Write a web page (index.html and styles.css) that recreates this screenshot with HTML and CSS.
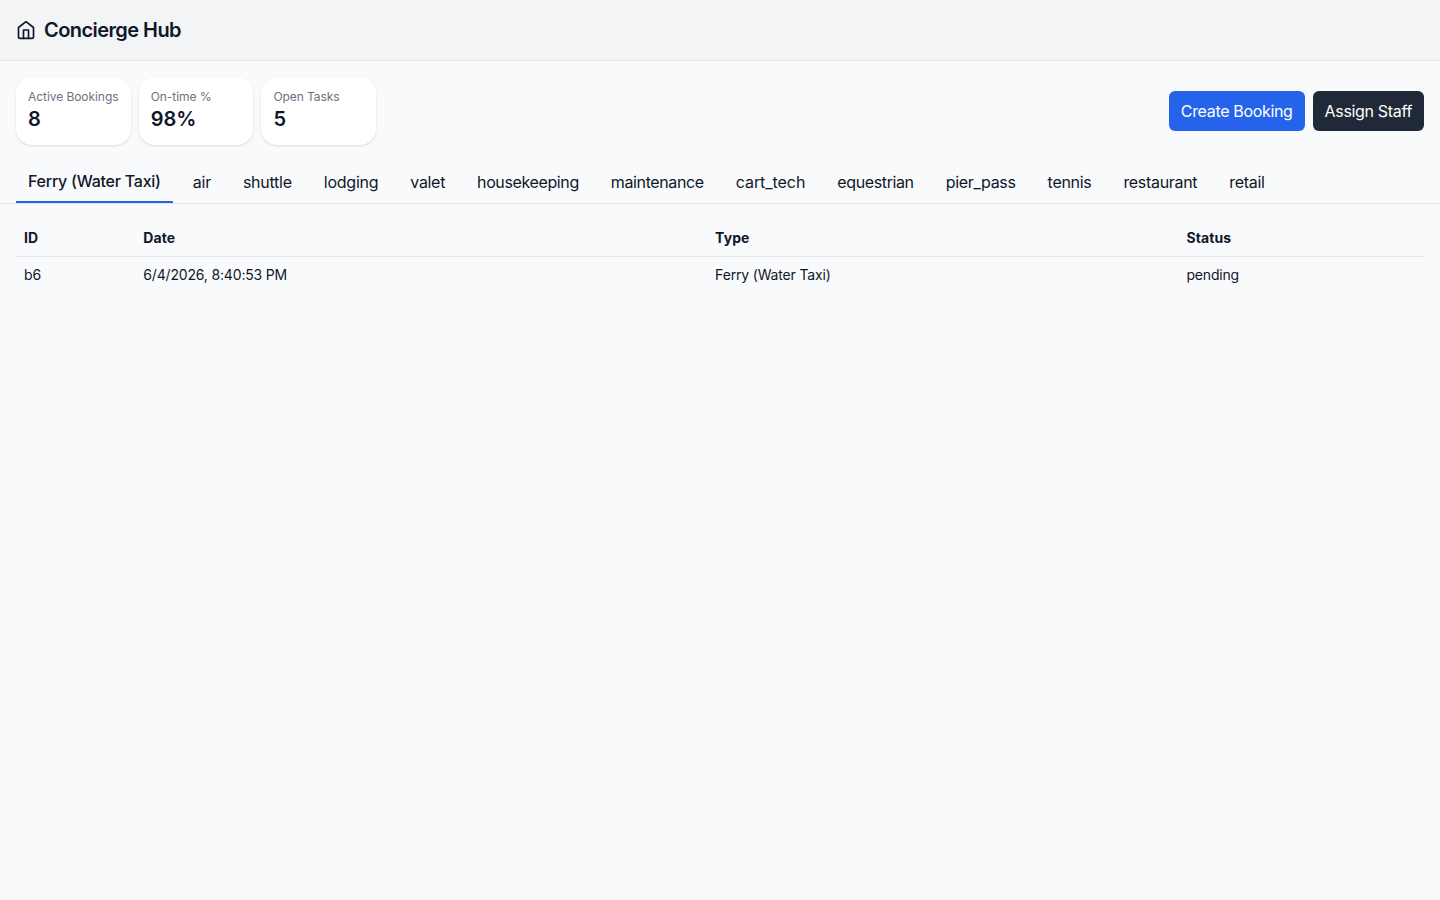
FILE: index.html
```html
<!DOCTYPE html>
<html lang="en">
<head>
    <meta charset="UTF-8">
    <meta name="viewport" content="width=device-width, initial-scale=1.0">
    <title>Concierge Hub</title>
    <link rel="stylesheet" href="styles.css">
</head>
<body>

    <header class="header">
        <svg class="header-icon" viewBox="0 0 24 24" fill="none" stroke="currentColor" stroke-width="2" stroke-linecap="round" stroke-linejoin="round">
            <path d="M3 9l9-7 9 7v11a2 2 0 0 1-2 2H5a2 2 0 0 1-2-2z"/>
            <path d="M9 22V12h6v10"/>
        </svg>
        <h1>Concierge Hub</h1>
    </header>

    <div class="toolbar">
        <div class="stats">
            <div class="stat-card">
                <div class="stat-label">Active Bookings</div>
                <div class="stat-value">8</div>
            </div>
            <div class="stat-card">
                <div class="stat-label">On-time %</div>
                <div class="stat-value">98%</div>
            </div>
            <div class="stat-card">
                <div class="stat-label">Open Tasks</div>
                <div class="stat-value">5</div>
            </div>
        </div>
        <div class="actions">
            <button class="button button-primary">Create Booking</button>
            <button class="button button-dark">Assign Staff</button>
        </div>
    </div>

    <nav class="tabs">
        <button class="tab active">Ferry (Water Taxi)</button>
        <button class="tab tab-short">air</button>
        <button class="tab tab-short">shuttle</button>
        <button class="tab tab-short">lodging</button>
        <button class="tab">valet</button>
        <button class="tab tab-long">housekeeping</button>
        <button class="tab tab-long">maintenance</button>
        <button class="tab tab-wide">cart_tech</button>
        <button class="tab tab-long">equestrian</button>
        <button class="tab">pier_pass</button>
        <button class="tab">tennis</button>
        <button class="tab">restaurant</button>
        <button class="tab">retail</button>
    </nav>

    <main class="content">
        <table class="bookings">
            <thead>
                <tr>
                    <th class="col-id">ID</th>
                    <th class="col-date">Date</th>
                    <th class="col-type">Type</th>
                    <th>Status</th>
                </tr>
            </thead>
            <tbody>
                <tr>
                    <td>b6</td>
                    <td>6/4/2026, 8:40:53 PM</td>
                    <td>Ferry (Water Taxi)</td>
                    <td>pending</td>
                </tr>
            </tbody>
        </table>
    </main>

</body>
</html>
```

FILE: styles.css
```css
* {
    box-sizing: border-box;
}
body {
    font-family: Inter, sans-serif;
    font-size: 16px;
    line-height: 24px;
    margin: 0;
    color: #0f172a;
    background-color: #f9fafb;
}
.header {
    display: flex;
    align-items: center;
    gap: 8px;
    height: 61px;
    padding: 0 16px;
    background-color: #f3f4f6;
    border-bottom: 1px solid #e5e7eb;
}
.header-icon {
    width: 20px;
    height: 20px;
}
.header h1 {
    margin: 0;
    font-size: 20px;
    line-height: 28px;
    font-weight: 600;
    letter-spacing: -0.57px;
}
.toolbar {
    display: flex;
    align-items: center;
    justify-content: space-between;
    padding: 16px;
}
.stats {
    display: grid;
    grid-template-columns: repeat(3, 114.7px);
    gap: 8px;
}
.stat-card {
    padding: 12px;
    background-color: #fff;
    border-radius: 16px;
    box-shadow: 0 1px 3px rgba(0, 0, 0, 0.1), 0 1px 2px -1px rgba(0, 0, 0, 0.1);
}
.stat-label {
    font-size: 12px;
    line-height: 16px;
    letter-spacing: -0.06px;
    white-space: nowrap;
    color: #6b7280;
}
.stat-value {
    font-size: 20px;
    line-height: 28px;
    font-weight: 600;
}
.actions {
    display: flex;
    gap: 8px;
}
.button {
    padding: 8px 12px;
    border: none;
    border-radius: 6px;
    font: inherit;
    letter-spacing: -0.33px;
    color: #fff;
    cursor: pointer;
}
.button-primary {
    background-color: #2563eb;
}
.button-dark {
    background-color: #1f2937;
}
.tabs {
    display: flex;
    gap: 8px;
    padding: 0 16px;
    border-bottom: 1px solid #e5e7eb;
}
.tab {
    padding: 8px 12px;
    border: none;
    background: none;
    font: inherit;
    letter-spacing: -0.31px;
    color: inherit;
    cursor: pointer;
}
.tab-short {
    letter-spacing: -0.25px;
}
.tab-long {
    letter-spacing: -0.38px;
}
.tab-wide {
    letter-spacing: -0.06px;
}
.tab.active {
    border-bottom: 2px solid #2563eb;
    font-weight: 500;
    letter-spacing: -0.24px;
}
.content {
    padding: 16px;
}
.bookings {
    width: 100%;
    border-collapse: collapse;
    font-size: 14px;
    line-height: 20px;
    text-align: left;
}
.bookings th,
.bookings td {
    padding: 8px;
}
.bookings th {
    letter-spacing: 0.1px;
}
.bookings td {
    letter-spacing: -0.17px;
}
.bookings thead tr {
    border-bottom: 1px solid #e5e7eb;
}
.col-id {
    width: 119.3px;
}
.col-date {
    width: 571.8px;
}
.col-type {
    width: 471.3px;
}
```
